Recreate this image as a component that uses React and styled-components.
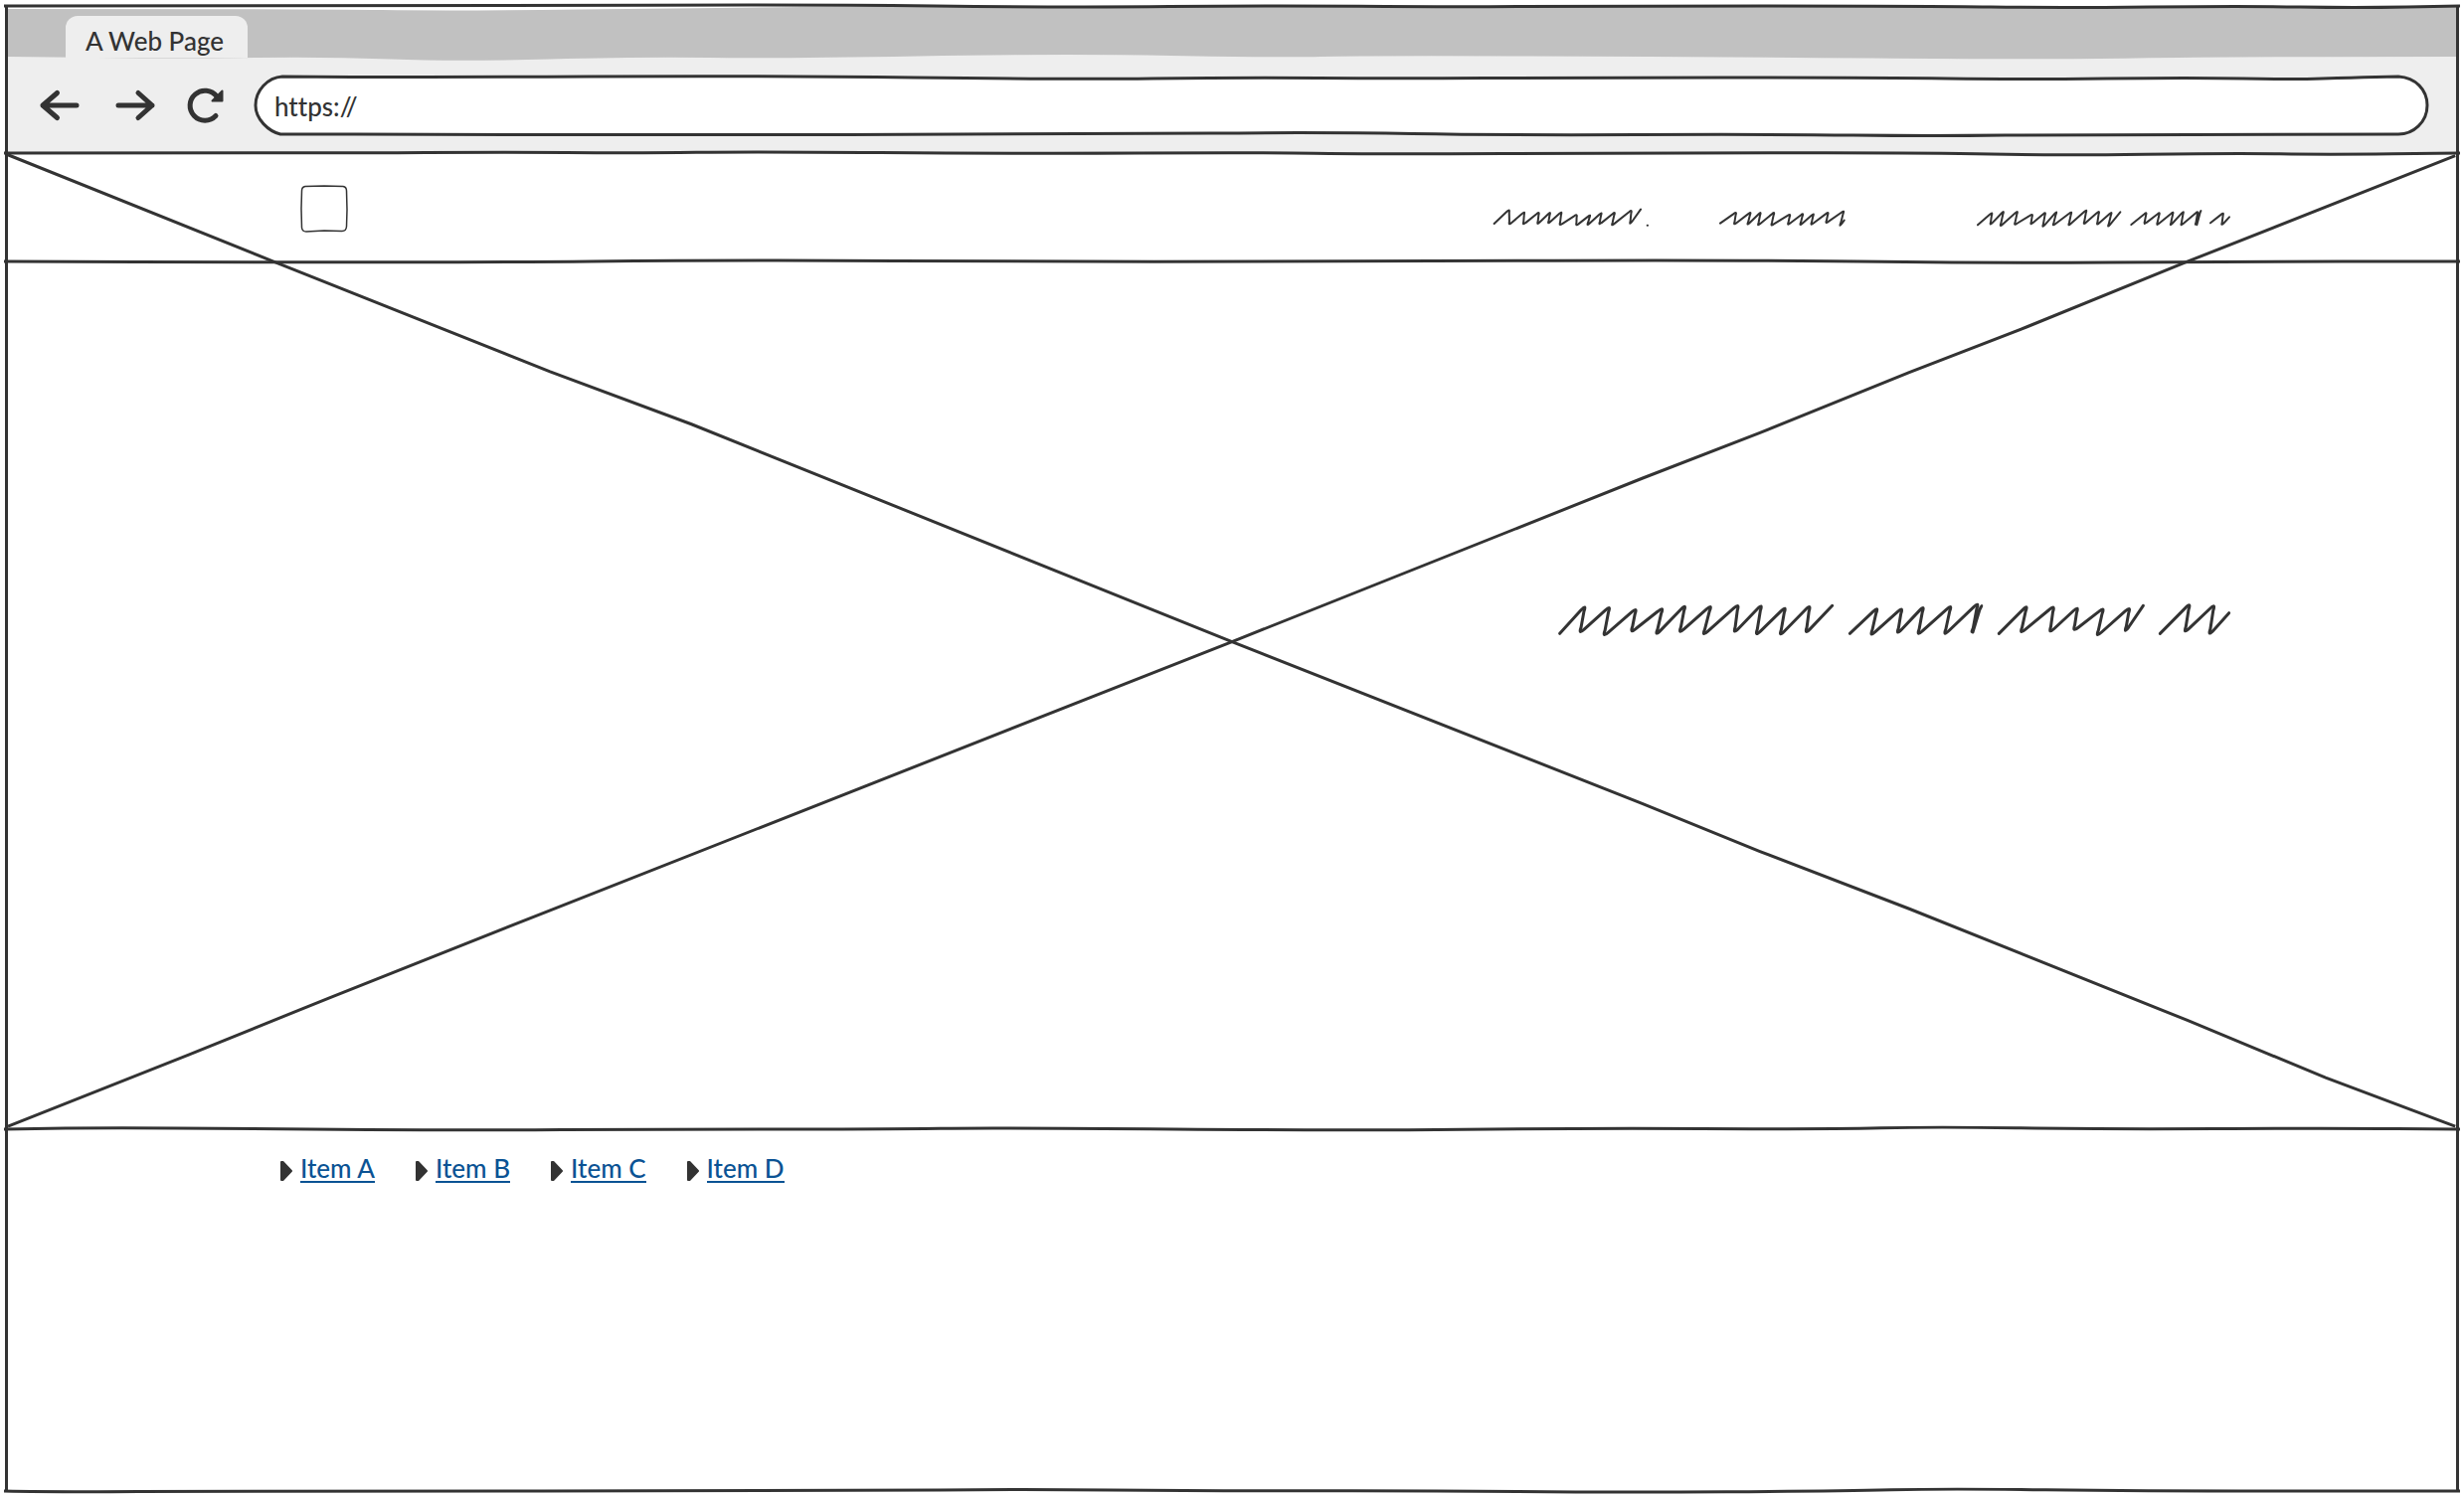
import React from 'react';
import styled, { createGlobalStyle } from 'styled-components';

const ink = '#333333';
const linkBlue = '#0b5394';
const font = '"Lato", "Open Sans", sans-serif';

const GlobalStyle = createGlobalStyle`
  *, *::before, *::after { box-sizing: border-box; }
  html, body, #root { height: 100%; }
  body {
    margin: 0;
    background: #ffffff;
    color: ${ink};
    font: 500 26px/32px ${font};
    font-variant-ligatures: none;
  }
  button, input { font-variant-ligatures: none; }
`;

const Page = styled.div`
  min-height: 100%;
  padding: 6px 5px;
  display: flex;
`;

const Browser = styled.div`
  flex: 1;
  min-width: 0;
  display: flex;
  flex-direction: column;
  border: solid ${ink};
  border-width: 0 3px;
`;

const Rule = styled.svg`
  display: block;
  flex: none;
  width: calc(100% + 8px);
  height: 6px;
  margin: -3px -4px;
  overflow: visible;
  position: relative;
  z-index: 1;
  fill: none;
  stroke: ${ink};
  stroke-width: 3px;
`;

const Backdrop = styled.svg`
  position: absolute;
  inset: 0;
  width: 100%;
  height: 100%;
  overflow: visible;
  pointer-events: none;
`;

const TabStrip = styled.div`
  position: relative;
  display: flex;
  align-items: flex-end;
  height: 52px;
  padding-left: 58px;
  background: #eeeeee;
`;

const Tab = styled.button`
  position: relative;
  height: 42px;
  padding: 8px 24px 0 20px;
  border: 0;
  border-radius: 12px 12px 0 0;
  background: #eeeeee;
  color: inherit;
  font: inherit;
`;

const Toolbar = styled.form`
  display: flex;
  align-items: center;
  gap: 28px;
  height: 96px;
  padding: 0 28px 0 32px;
  background: #eeeeee;
`;

const Controls = styled.div`
  display: flex;
  gap: 34px;
`;

const IconButton = styled.button`
  display: flex;
  padding: 0;
  border: 0;
  background: none;
`;

const Icon = styled.svg`
  display: block;
  width: 40px;
  height: 40px;
  overflow: visible;
  fill: none;
  stroke: ${ink};
  stroke-width: 5px;
  stroke-linecap: round;
  stroke-linejoin: round;
`;

const ArrowHead = styled.path`
  fill: ${ink};
  stroke-width: 2px;
`;

const AddressBox = styled.div`
  position: relative;
  flex: 1;
  min-width: 0;
  display: flex;
  height: 60px;
`;

const Address = styled.input`
  position: relative;
  flex: 1;
  min-width: 0;
  padding: 2px 20px 0;
  border: 0;
  background: transparent;
  color: inherit;
  font: inherit;
  outline: 0;
`;

const Hero = styled.main`
  position: relative;
  display: flex;
  flex-direction: column;
  min-height: 981px;
`;

const SiteHeader = styled.header`
  display: flex;
  align-items: center;
  justify-content: space-between;
  height: 109px;
  padding: 2px 227px 0 294px;
`;

const Logo = styled.svg`
  display: block;
  width: 48px;
  height: 48px;
  fill: #ffffff;
  stroke: ${ink};
  stroke-width: 1.5px;
`;

const SiteNav = styled.nav`
  display: flex;
  padding-top: 18px;
`;

const NavLink = styled.a`
  display: block;
  margin-left: ${(p) => p.$gap || 0}px;
`;

const Scribble = styled.svg`
  display: block;
  width: ${(p) => p.$width}px;
  height: ${(p) => p.$height}px;
  overflow: visible;
  fill: none;
  stroke: ${ink};
  stroke-width: ${(p) => p.$weight}px;
  stroke-linecap: round;
  stroke-linejoin: round;
`;

const Headline = styled.div`
  display: flex;
  justify-content: flex-end;
  padding: 343px 228px 0 0;
`;

const Footer = styled.footer`
  flex: 1;
  padding: 27px 274px;
`;

const Items = styled.ul`
  display: flex;
  gap: 41px;
  margin: 0;
  padding: 0;
  list-style: none;
`;

const Item = styled.li`
  display: flex;
  align-items: center;
  gap: 8px;
`;

const Marker = styled.svg`
  width: 12px;
  height: 20px;
  margin-top: 4px;
  fill: ${ink};
  stroke: ${ink};
  stroke-width: 2px;
  stroke-linejoin: round;
`;

const Link = styled.a`
  color: ${linkBlue};
  border-bottom: 2px solid ${linkBlue};
  line-height: 26px;
  text-decoration: none;
`;

/* Smooth hand-drawn stroke: midpoints joined by quadratic curves. */
function curve(points, start = 'M') {
  let d = `${start}${points[0][0]} ${points[0][1]}`;
  for (let i = 1; i < points.length - 1; i += 1) {
    const [x, y] = points[i];
    const [nx, ny] = points[i + 1];
    d += `Q${x} ${y} ${(x + nx) / 2} ${(y + ny) / 2}`;
  }
  const last = points[points.length - 1];
  return `${d}L${last[0]} ${last[1]}`;
}

/* Zigzag with softened peaks; the list holds x, y pairs. */
function zigzag(list, radius) {
  const pts = [];
  for (let i = 0; i < list.length; i += 2) pts.push([list[i], list[i + 1]]);
  const toward = (a, b) => {
    const len = Math.hypot(b[0] - a[0], b[1] - a[1]);
    const t = Math.min(radius / len, 0.5);
    return `${a[0] + (b[0] - a[0]) * t} ${a[1] + (b[1] - a[1]) * t}`;
  };
  let d = `M${pts[0][0]} ${pts[0][1]}`;
  for (let i = 1; i < pts.length - 1; i += 1) {
    const p = pts[i];
    const side = i % 2 === 1 ? 1 : -1;
    const reach = radius / 3;
    d += `L${toward(p, pts[i - 1])}`;
    d += `Q${p[0] + side * reach} ${p[1] - side * reach} ${toward(p, pts[i + 1])}`;
  }
  const last = pts[pts.length - 1];
  return `${d}L${last[0]} ${last[1]}`;
}

const rules = {
  top: [[0, 3], [500, 3], [800, 1.5], [1070, 4.5], [1270, 2.5], [1450, 4], [1600, 3], [1930, 3], [2060, 5], [2250, 3], [2360, 5], [2466, 3]],
  toolbar: [[0, 3], [300, 3.5], [490, 2], [640, 3], [750, 1.5], [1010, 3.5], [1270, 2.5], [1360, 4], [1650, 3], [1930, 2.5], [2060, 5.5], [2240, 3], [2330, 4.5], [2466, 3]],
  header: [[0, 3], [430, 4.5], [750, 1.5], [1040, 3.5], [1270, 3], [1770, 1.5], [2000, 5], [2230, 3], [2466, 3]],
  hero: [[0, 4], [95, 2], [250, 4], [480, 5], [640, 4], [880, 4], [1000, 2.5], [1350, 5.5], [1580, 3], [1830, 4], [1940, 1.5], [2100, 4], [2340, 3], [2466, 4]],
  bottom: [[0, 3], [50, 4], [220, 3], [860, 3], [1020, 1], [1200, 3], [1420, 2.5], [1620, 4.5], [1840, 3], [1950, 0.5], [2150, 3], [2466, 3]],
};

const stripTop = [[0, 3], [300, 3], [452, 5], [700, 2], [900, 0], [2462, 0]];
const stripBottom = [[2462, 51], [2230, 51], [2050, 54], [1700, 51], [1360, 50], [1280, 52], [1060, 48], [770, 53], [640, 51], [450, 56], [320, 51], [180, 53], [0, 51]];

const addressTop = [[28, 1], [162, 2], [510, 0], [816, 4], [990, 2], [1150, 3], [1325, 2], [1630, 2], [1775, 4], [1950, 2], [2050, 4], [2110, 2], [2156, 1]];
const addressBottom = [[2156, 59], [1833, 59], [1688, 61], [1528, 59], [1252, 60], [1077, 57], [845, 59], [350, 60], [176, 59], [26, 59]];

const navScribbles = {
  first: [68, 105, 113, 62, 114, 108, 159, 69, 156, 108, 203, 70, 199, 107, 237, 70, 231, 105, 271, 69, 266, 110, 317, 77, 316, 111, 358, 78, 349, 110, 392, 71, 385, 108, 432, 70, 423, 111, 482, 64, 478, 107, 510, 62],
  second: [750, 104, 798, 70, 792, 108, 842, 70, 832, 109, 872, 70, 864, 111, 913, 70, 904, 111, 961, 76, 954, 109, 1000, 74, 991, 110, 1032, 74, 1024, 109, 1076, 70, 1069, 104, 1123, 66, 1111, 113, 1124, 95],
  third: [
    [87, 109, 130, 71, 125, 109, 165, 67, 155, 113, 207, 67, 198, 109, 252, 76, 247, 108, 291, 71, 283, 116, 325, 68, 314, 111, 370, 69, 361, 111, 415, 63, 407, 107, 453, 67, 447, 109, 491, 70, 480, 115, 517, 70],
    [550, 108, 596, 71, 589, 107, 636, 71, 627, 110, 677, 69, 668, 111, 708, 67, 700, 111, 751, 68, 744, 110, 760, 63, 748, 109],
    [789, 103, 828, 72, 823, 110, 846, 85],
  ],
};

const headline = [
  [56, 142, 132, 58, 117, 141, 206, 60, 189, 150, 286, 66, 272, 138, 366, 64, 347, 146, 434, 56, 418, 140, 512, 57, 489, 147, 594, 54, 583, 140, 664, 55, 649, 147, 736, 62, 721, 148, 810, 57, 799, 141, 878, 58],
  [931, 142, 1014, 64, 995, 148, 1088, 65, 1075, 143, 1153, 60, 1137, 146, 1236, 57, 1217, 146, 1317, 50, 1300, 142, 1328, 53, 1302, 138],
  [1381, 142, 1465, 58, 1447, 141, 1546, 59, 1535, 139, 1618, 62, 1607, 134, 1696, 65, 1677, 150, 1775, 63, 1762, 138, 1816, 58],
  [1867, 142, 1956, 52, 1942, 139, 2030, 55, 2016, 146, 2075, 80],
];

function Line({ shape }) {
  return (
    <Rule viewBox="0 0 2466 6" preserveAspectRatio="none" aria-hidden="true">
      <path d={curve(shape)} vectorEffect="non-scaling-stroke" />
    </Rule>
  );
}

function NavScribble({ label, box, width, gap, strokes, children }) {
  return (
    <NavLink href="#" aria-label={label} $gap={gap}>
      <Scribble viewBox={box} $width={width} $height={18} $weight={6}>
        {strokes.map((s) => <path key={s[0]} d={zigzag(s, 9)} />)}
        {children}
      </Scribble>
    </NavLink>
  );
}

export default function App() {
  return (
    <>
      <GlobalStyle />
      <Page>
        <Browser>
          <Line shape={rules.top} />
          <TabStrip>
            <Backdrop viewBox="0 0 2462 52" preserveAspectRatio="none" aria-hidden="true">
              <path d="M0 0H2462V20H0Z" fill="#ffffff" />
              <path d={`${curve(stripTop)}${curve(stripBottom, 'L')}Z`} fill="#c1c1c1" />
            </Backdrop>
            <Tab type="button">A Web Page</Tab>
          </TabStrip>
          <Toolbar onSubmit={(e) => e.preventDefault()}>
            <Controls>
              <IconButton type="button" aria-label="Back">
                <Icon viewBox="0 0 40 40">
                  <path d="M37 20H3M17.500 7.500L3 20l14.500 12.500" />
                </Icon>
              </IconButton>
              <IconButton type="button" aria-label="Forward">
                <Icon viewBox="0 0 40 40">
                  <path d="M5 20h34M25 7.500L39 20 25 32.500" />
                </Icon>
              </IconButton>
              <IconButton type="button" aria-label="Reload">
                <Icon viewBox="0 0 40 40">
                  <path d="M29 30.500A15 15 0 1 1 30 11" />
                  <ArrowHead d="M25.500 15.500H35.500V5.500Z" />
                </Icon>
              </IconButton>
            </Controls>
            <AddressBox>
              <Backdrop viewBox="0 0 2186 60" preserveAspectRatio="none" aria-hidden="true">
                <path
                  d={`${curve(addressTop)}C2173 2 2185 14 2185 30C2185 47 2171 59 2156 59${curve(addressBottom, 'L')}C14 56 1 44 1 30C1 15 13 2 28 1Z`}
                  fill="#ffffff"
                  stroke={ink}
                  strokeWidth="3"
                  vectorEffect="non-scaling-stroke"
                />
              </Backdrop>
              <Address aria-label="Address" defaultValue="https://" />
            </AddressBox>
          </Toolbar>
          <Line shape={rules.toolbar} />
          <Hero>
            <Backdrop viewBox="5 97.400 1558 620.800" preserveAspectRatio="none" aria-hidden="true">
              <g fill="none" stroke={ink} strokeWidth="3">
                <path vectorEffect="non-scaling-stroke" d="M5 98.500L174 166.400L350 236.500L440 270L784 408.500L1045 511.500L1120 542L1215 578.500L1392 649.500L1480 686L1562.500 717" />
                <path vectorEffect="non-scaling-stroke" d="M5 717L120 671.500L210 635L350 579.500L784 408.500L1045 304.500L1120 275.500L1215 237L1290 208L1392 166.500L1562.500 99" />
              </g>
            </Backdrop>
            <SiteHeader>
              <Logo viewBox="0 0 48 48" aria-hidden="true">
                <path d="M5 1.500L24 1L43 1.500Q46.500 2 46.500 6L47 25L46.500 42Q46 46.500 42 46.500L24 46L6 47Q2 47 1.500 43L1 24L1.500 6Q1.500 2 5 1.500Z" />
              </Logo>
              <SiteNav aria-label="Site">
                <NavScribble label="First link" box="66 60 468 54" width={156} strokes={[navScribbles.first]}>
                  <path d="M530 110h1" />
                </NavScribble>
                <NavScribble label="Second link" box="747 60 381 54" width={127} gap={71} strokes={[navScribbles.second]} />
                <NavScribble label="Third link" box="84 60 765 54" width={255} gap={132} strokes={navScribbles.third} />
              </SiteNav>
            </SiteHeader>
            <Line shape={rules.header} />
            <Headline>
              <Scribble viewBox="54 48 2022 102" $width={674} $height={34} $weight={9} role="img" aria-label="Headline">
                {headline.map((s) => <path key={s[0]} d={zigzag(s, 18)} />)}
              </Scribble>
            </Headline>
          </Hero>
          <Line shape={rules.hero} />
          <Footer>
            <Items>
              {['Item A', 'Item B', 'Item C', 'Item D'].map((label) => (
                <Item key={label}>
                  <Marker viewBox="0 0 12 20" aria-hidden="true"><path d="M1 1H2.500L11 10L2.500 19H1Z" /></Marker>
                  <Link href="#">{label}</Link>
                </Item>
              ))}
            </Items>
          </Footer>
          <Line shape={rules.bottom} />
        </Browser>
      </Page>
    </>
  );
}
